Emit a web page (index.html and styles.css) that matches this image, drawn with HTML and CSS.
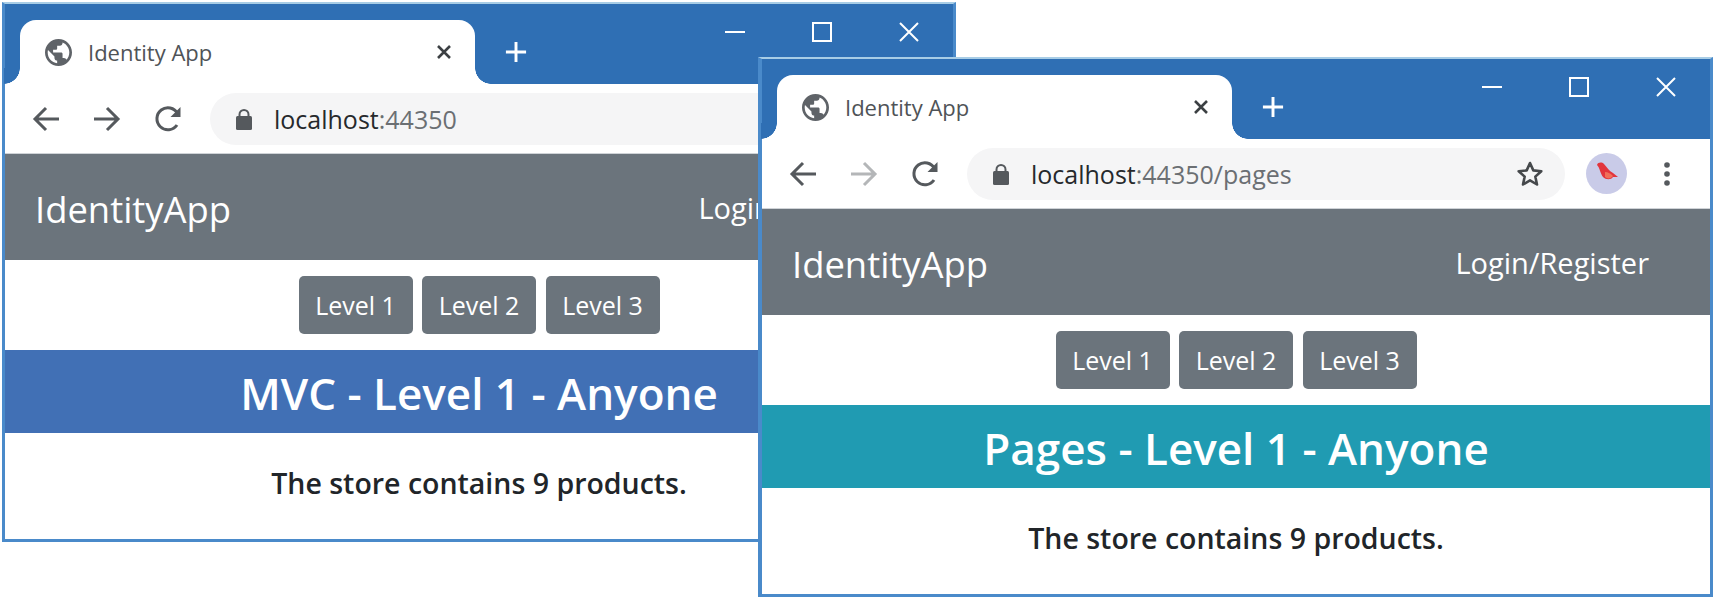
FILE: index.html
```html
<!DOCTYPE html>
<html lang="en">
<head>
    <meta charset="UTF-8">
    <title>Identity App</title>
    <link rel="stylesheet" href="styles.css">
</head>
<body>
    <svg class="icon-defs" aria-hidden="true">
        <symbol id="i-globe" viewBox="2 2 20 20"><path d="M12 2C6.48 2 2 6.48 2 12s4.48 10 10 10 10-4.48 10-10S17.52 2 12 2zm-1 17.93c-3.95-.49-7-3.85-7-7.93 0-.62.08-1.21.21-1.79L9 15v1c0 1.1.9 2 2 2v1.93zm6.9-2.54c-.26-.81-1-1.39-1.9-1.39h-1v-3c0-.55-.45-1-1-1H8v-2h2c.55 0 1-.45 1-1V7h2c1.1 0 2-.9 2-2v-.41c2.93 1.19 5 4.06 5 7.41 0 2.08-.8 3.97-2.1 5.39z" fill="currentColor"/></symbol>
        <symbol id="i-x" viewBox="0 0 16 16"><path d="M2 2l12 12M14 2L2 14" fill="none" stroke="currentColor" stroke-width="2.6"/></symbol>
        <symbol id="i-plus" viewBox="0 0 24 24"><path d="M12 1v22M1 12h22" fill="none" stroke="currentColor" stroke-width="3.2"/></symbol>
        <symbol id="i-min" viewBox="0 0 20 20"><path d="M0 10h20" stroke="currentColor" stroke-width="2"/></symbol>
        <symbol id="i-max" viewBox="0 0 20 20"><rect x="1" y="1" width="18" height="18" fill="none" stroke="currentColor" stroke-width="2"/></symbol>
        <symbol id="i-close" viewBox="0 0 20 20"><path d="M1 1l18 18M19 1L1 19" fill="none" stroke="currentColor" stroke-width="2"/></symbol>
        <symbol id="i-back" viewBox="0 0 28 26"><path d="M27 13H3M14 2L3 13l11 11" fill="none" stroke="currentColor" stroke-width="3"/></symbol>
        <symbol id="i-forward" viewBox="0 0 28 26"><path d="M1 13h24M14 2l11 11-11 11" fill="none" stroke="currentColor" stroke-width="3"/></symbol>
        <symbol id="i-reload" viewBox="0 0 28 28"><path d="M23 20a11 11 0 1 1 .6-11.5" fill="none" stroke="currentColor" stroke-width="3"/><path d="M26.500 2v10h-10z" fill="currentColor"/></symbol>
        <symbol id="i-lock" viewBox="0 0 16 22"><path d="M3.500 9V6.500a4.500 4.500 0 0 1 9 0V9" fill="none" stroke="currentColor" stroke-width="2"/><rect y="8" width="16" height="14" rx="1.500" fill="currentColor"/></symbol>
        <symbol id="i-star" viewBox="0 0 28 28"><path d="M14 3l3.300 7.400 8 .8-6 5.400 1.700 7.900-7-4.100-7 4.100 1.700-7.900-6-5.400 8-.8z" fill="none" stroke="currentColor" stroke-width="2.600" stroke-linejoin="round"/></symbol>
        <symbol id="i-avatar" viewBox="0 0 41 41"><circle cx="20.500" cy="20.500" r="20.500" fill="#c9cbe8"/><path d="M11 12c1-3 5-3 7-1 3 3 5 7 9 9l5 4-5 0c-2 3-7 3-10 0-3-4-3-9-6-12z" fill="#e2353d"/><path d="M19 19c3 0 6 2 8 4-2 3-6 3-8 1z" fill="#f0705a"/></symbol>
        <symbol id="i-dots" viewBox="0 0 6 24"><circle cx="3" cy="3" r="2.800" fill="currentColor"/><circle cx="3" cy="12" r="2.800" fill="currentColor"/><circle cx="3" cy="21" r="2.800" fill="currentColor"/></symbol>
    </svg>

    <!-- MVC window -->
    <div class="window window-back">
        <div class="titlebar">
            <div class="tab">
                <svg class="tab-globe"><use href="#i-globe"/></svg>
                <span class="tab-title">Identity App</span>
                <svg class="tab-close"><use href="#i-x"/></svg>
            </div>
            <svg class="new-tab"><use href="#i-plus"/></svg>
            <div class="controls">
                <div class="control"><svg><use href="#i-min"/></svg></div>
                <div class="control"><svg><use href="#i-max"/></svg></div>
                <div class="control"><svg><use href="#i-close"/></svg></div>
            </div>
        </div>
        <div class="toolbar">
            <svg class="nav-icon"><use href="#i-back"/></svg>
            <svg class="nav-icon"><use href="#i-forward"/></svg>
            <svg class="nav-icon reload"><use href="#i-reload"/></svg>
            <div class="address">
                <svg class="lock"><use href="#i-lock"/></svg>
                <span class="url">localhost<span class="url-rest">:44350</span></span>
                <svg class="star"><use href="#i-star"/></svg>
            </div>
            <svg class="avatar"><use href="#i-avatar"/></svg>
            <svg class="dots"><use href="#i-dots"/></svg>
        </div>
        <div class="navbar">
            <span class="brand">IdentityApp</span>
            <span class="login">Login/Register</span>
        </div>
        <div class="levels">
            <a class="level-btn">Level 1</a>
            <a class="level-btn">Level 2</a>
            <a class="level-btn">Level 3</a>
        </div>
        <h1 class="banner banner-mvc">MVC - Level 1 - Anyone</h1>
        <p class="summary">The store contains 9 products.</p>
    </div>

    <!-- Razor Pages window -->
    <div class="window window-front">
        <div class="titlebar">
            <div class="tab">
                <svg class="tab-globe"><use href="#i-globe"/></svg>
                <span class="tab-title">Identity App</span>
                <svg class="tab-close"><use href="#i-x"/></svg>
            </div>
            <svg class="new-tab"><use href="#i-plus"/></svg>
            <div class="controls">
                <div class="control"><svg><use href="#i-min"/></svg></div>
                <div class="control"><svg><use href="#i-max"/></svg></div>
                <div class="control"><svg><use href="#i-close"/></svg></div>
            </div>
        </div>
        <div class="toolbar">
            <svg class="nav-icon"><use href="#i-back"/></svg>
            <svg class="nav-icon disabled"><use href="#i-forward"/></svg>
            <svg class="nav-icon reload"><use href="#i-reload"/></svg>
            <div class="address">
                <svg class="lock"><use href="#i-lock"/></svg>
                <span class="url">localhost<span class="url-rest">:44350/pages</span></span>
                <svg class="star"><use href="#i-star"/></svg>
            </div>
            <svg class="avatar"><use href="#i-avatar"/></svg>
            <svg class="dots"><use href="#i-dots"/></svg>
        </div>
        <div class="navbar">
            <span class="brand">IdentityApp</span>
            <span class="login">Login/Register</span>
        </div>
        <div class="levels">
            <a class="level-btn">Level 1</a>
            <a class="level-btn">Level 2</a>
            <a class="level-btn">Level 3</a>
        </div>
        <h1 class="banner banner-pages">Pages - Level 1 - Anyone</h1>
        <p class="summary">The store contains 9 products.</p>
    </div>
</body>
</html>
```

FILE: styles.css
```css
body {
    margin: 0;
    width: 1714px;
    height: 599px;
    position: relative;
    overflow: hidden;
    background: #fff;
    font-family: "Open Sans", "Noto Sans", sans-serif;
}
.icon-defs {
    display: none;
}
.window {
    position: absolute;
    box-sizing: border-box;
    width: 954px;
    height: 540px;
    display: flex;
    flex-direction: column;
    background: #fff;
    border: 3px solid #4a8aca;
    border-top: 2px solid #a8cde6;
}
.window-back {
    left: 2px;
    top: 2px;
}
.window-front {
    left: 758px;
    top: 57px;
    width: 955px;
    border-left-width: 4px;
}

/* title bar */
.titlebar {
    height: 80px;
    flex: none;
    display: flex;
    align-items: flex-end;
    background: #2f6fb4;
    color: #fff;
}
.tab {
    position: relative;
    box-sizing: border-box;
    width: 455px;
    height: 64px;
    margin-left: 15px;
    padding: 0 23px 0 25px;
    display: flex;
    align-items: center;
    background: #fff;
    border-radius: 16px 16px 0 0;
    color: #5f6368;
}
.tab::before,
.tab::after {
    content: "";
    position: absolute;
    bottom: 0;
    width: 16px;
    height: 16px;
}
.tab::before {
    left: -16px;
    background: radial-gradient(circle at 0 0, #2f6fb4 15.500px, #fff 16px);
}
.tab::after {
    right: -16px;
    background: radial-gradient(circle at 100% 0, #2f6fb4 15.500px, #fff 16px);
}
.tab-globe {
    width: 27px;
    height: 27px;
    flex: none;
}
.tab-title {
    margin-left: 16px;
    font-size: 22px;
    color: #4f5357;
}
.tab-close {
    width: 16px;
    height: 16px;
    margin-left: auto;
    color: #3c4043;
}
.new-tab {
    width: 22px;
    height: 22px;
    margin: 0 0 21px 30px;
}
.controls {
    display: flex;
    align-self: flex-start;
    margin-left: auto;
    margin-right: 1px;
}
.control {
    width: 87px;
    height: 56px;
    display: flex;
    align-items: center;
    justify-content: center;
}
.control svg {
    width: 20px;
    height: 20px;
}

/* address bar */
.toolbar {
    height: 70px;
    flex: none;
    box-sizing: border-box;
    padding: 0 0 0 27px;
    display: flex;
    align-items: center;
    background: #fff;
    border-bottom: 1px solid #cfd3d7;
    color: #55595d;
}
.nav-icon {
    width: 28px;
    height: 26px;
    margin-right: 33px;
    flex: none;
}
.nav-icon.disabled {
    color: #b4b6b8;
}
.nav-icon.reload {
    width: 28px;
    height: 28px;
    margin-right: 28px;
}
.address {
    width: 598px;
    height: 52px;
    flex: none;
    box-sizing: border-box;
    padding: 0 21px 0 26px;
    display: flex;
    align-items: center;
    background: #f5f5f6;
    border-radius: 26px;
}
.lock {
    width: 16px;
    height: 22px;
    flex: none;
}
.url {
    margin-left: 22px;
    font-size: 25px;
    color: #26292c;
}
.url-rest {
    color: #6b6f73;
}
.star {
    width: 28px;
    height: 28px;
    margin-left: auto;
    color: #45484b;
}
.avatar {
    width: 41px;
    height: 41px;
    margin-left: 21px;
    flex: none;
}
.dots {
    width: 6px;
    height: 24px;
    margin-left: 37px;
    flex: none;
    color: #55595d;
}

/* page inside the browser */
.navbar {
    height: 106px;
    flex: none;
    box-sizing: border-box;
    padding: 0 61px 0 30px;
    display: flex;
    align-items: center;
    justify-content: space-between;
    background: #6b747c;
    color: #fff;
}
.brand {
    margin-top: 3px;
    font-size: 36.400px;
}
.login {
    font-size: 29px;
}
.levels {
    flex: none;
    padding: 16px 0;
    display: flex;
    justify-content: center;
    gap: 9.500px;
}
.level-btn {
    width: 114px;
    height: 58px;
    display: flex;
    align-items: center;
    justify-content: center;
    background: #6b747c;
    border-radius: 5px;
    color: #fff;
    font-size: 25px;
}
.banner {
    height: 83px;
    box-sizing: border-box;
    padding-top: 2px;
    flex: none;
    margin: 0;
    display: flex;
    align-items: center;
    justify-content: center;
    color: #fff;
    font-size: 44px;
    font-weight: 600;
}
.banner-mvc {
    background: #4170b5;
}
.banner-pages {
    background: #209bb2;
}
.summary {
    margin: 0;
    padding-top: 31px;
    text-align: center;
    color: #212529;
    font-size: 28.500px;
    font-weight: 600;
}
```
